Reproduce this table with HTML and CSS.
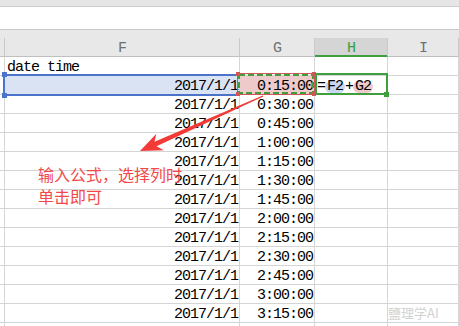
FILE: index.html
```html
<!DOCTYPE html>
<html lang="zh-CN">
<head>
<meta charset="utf-8">
<title>date time</title>
<link rel="stylesheet" href="styles.css">
</head>
<body>
<div class="app">
  <div class="topband"></div>
  <div class="formulabar"></div>
  <div class="band"></div>

  <div class="sheet">
    <div class="c hd c0"></div><div class="c hd center">F</div><div class="c hd center">G</div><div class="c hd center active">H</div><div class="c hd center">I</div>

    <div class="c c0"></div><div class="c left"><span>date time</span></div><div class="c"></div><div class="c"></div><div class="c"></div>

    <div class="c c0"></div><div class="c num sel-f"><span>2017/1/1</span></div><div class="c num sel-g"><span>0:15:00</span></div><div class="c left"><span class="formula">=<span class="ref ref-f">F2</span>+<span class="ref ref-g">G2</span></span></div><div class="c"></div>

    <div class="c c0"></div><div class="c num"><span>2017/1/1</span></div><div class="c num"><span>0:30:00</span></div><div class="c"></div><div class="c"></div>
    <div class="c c0"></div><div class="c num"><span>2017/1/1</span></div><div class="c num"><span>0:45:00</span></div><div class="c"></div><div class="c"></div>
    <div class="c c0"></div><div class="c num"><span>2017/1/1</span></div><div class="c num"><span>1:00:00</span></div><div class="c"></div><div class="c"></div>
    <div class="c c0"></div><div class="c num"><span>2017/1/1</span></div><div class="c num"><span>1:15:00</span></div><div class="c"></div><div class="c"></div>
    <div class="c c0"></div><div class="c num"><span>2017/1/1</span></div><div class="c num"><span>1:30:00</span></div><div class="c"></div><div class="c"></div>
    <div class="c c0"></div><div class="c num"><span>2017/1/1</span></div><div class="c num"><span>1:45:00</span></div><div class="c"></div><div class="c"></div>
    <div class="c c0"></div><div class="c num"><span>2017/1/1</span></div><div class="c num"><span>2:00:00</span></div><div class="c"></div><div class="c"></div>
    <div class="c c0"></div><div class="c num"><span>2017/1/1</span></div><div class="c num"><span>2:15:00</span></div><div class="c"></div><div class="c"></div>
    <div class="c c0"></div><div class="c num"><span>2017/1/1</span></div><div class="c num"><span>2:30:00</span></div><div class="c"></div><div class="c"></div>
    <div class="c c0"></div><div class="c num"><span>2017/1/1</span></div><div class="c num"><span>2:45:00</span></div><div class="c"></div><div class="c"></div>
    <div class="c c0"></div><div class="c num"><span>2017/1/1</span></div><div class="c num"><span>3:00:00</span></div><div class="c"></div><div class="c"></div>
    <div class="c c0"></div><div class="c num"><span>2017/1/1</span></div><div class="c num"><span>3:15:00</span></div><div class="c"></div><div class="c"></div>
    <div class="c c0"></div><div class="c"></div><div class="c"></div><div class="c"></div><div class="c"></div>
  </div>

  <!-- selection frames drawn over the grid -->
  <div class="frame-f"></div>
  <div class="handle handle-blue h-tl"></div>
  <div class="handle handle-blue h-bl"></div>

  <div class="frame-g">
    <svg class="ants" width="76" height="20" viewBox="0 0 76 20">
      <rect x="1" y="1" width="74" height="18" fill="none" stroke="#3f9f3f" stroke-width="2" stroke-dasharray="6 3"/>
    </svg>
  </div>
  <div class="handle handle-red r-tl"></div>
  <div class="handle handle-red r-tr"></div>
  <div class="handle handle-red r-bl"></div>
  <div class="handle handle-red r-br"></div>

  <div class="frame-h"></div>
  <div class="fill-handle"></div>

  <!-- callout arrow -->
  <svg class="arrow" width="459" height="326" viewBox="0 0 459 326">
    <polygon fill="#f23a36" points="140,151 163.8,150.2 156.5,146.3 263.3,96.6 262.7,95.4 154.5,141.8 156.4,133.8"/>
  </svg>

  <div class="note">输入公式，选择列时<br>单击即可</div>
  <div class="mark">鹽理学AI</div>
</div>
</body>
</html>
```

FILE: styles.css
```css
html, body {
  margin: 0;
  padding: 0;
  background: #ffffff;
}

.app {
  position: relative;
  width: 459px;
  height: 326px;
  overflow: hidden;
}

.topband {
  height: 6px;
  background: #e6e6e6;
  border-bottom: 1px solid #cccccc;
}

.formulabar {
  height: 22px;
  background: #ffffff;
  border-bottom: 1px solid #c8c8c8;
}

.band {
  height: 8px;
  background: #e8e8e8;
}

/* worksheet grid */
.sheet {
  display: grid;
  grid-template-columns: 5px 235px 75px 73px 1fr;
  grid-auto-rows: 19px;
}

.c {
  box-sizing: border-box;
  border-right: 1px solid #d6d6d6;
  border-bottom: 1px solid #d4d4d4;
  display: flex;
  align-items: flex-end;
  overflow: visible;
  white-space: nowrap;
  font-family: "Liberation Mono", "DejaVu Sans Mono", monospace;
  font-size: 15px;
  letter-spacing: -1px;
  line-height: 14px;
  color: #000000;
}

.hd {
  background: #e8e8e8;
  border-right-color: #c9c9c9;
  border-bottom-color: #bfbfbf;
  color: #707070;
}

.hd.active {
  background: #d5d5d5;
  color: #33a043;
  border-bottom-color: #3f9f3f;
  box-shadow: inset 0 -1px 0 #3f9f3f;
}

.center {
  justify-content: center;
}

.left {
  justify-content: flex-start;
  padding-left: 2px;
}

.num {
  justify-content: flex-end;
  padding-right: 1px;
}

.sel-f {
  background: #dae3f4;
}

.sel-g {
  background: #eecaca;
}

.formula .ref {
  display: inline-block;
  line-height: 12px;
  border-radius: 6px;
  padding: 0 2px 0 2px;
}

.ref-f {
  background: #c7d6f1;
}

.ref-g {
  background: #efc9c9;
}

/* selection frames */
.frame-f {
  position: absolute;
  left: 3px;
  top: 74px;
  width: 233px;
  height: 18px;
  border: 2px solid #4a73c9;
  border-right: none;
}

.frame-g {
  position: absolute;
  left: 237px;
  top: 73px;
  width: 76px;
  height: 20px;
  border: 1px solid #d05555;
}

.ants {
  display: block;
}

.frame-h {
  position: absolute;
  left: 315px;
  top: 73px;
  width: 69px;
  height: 18px;
  border: 2px solid #3f9f3f;
}

.handle {
  position: absolute;
}

.handle-blue {
  width: 5px;
  height: 5px;
  background: #4a73c9;
}

.h-tl { left: 2px; top: 72px; }
.h-bl { left: 2px; top: 93px; }

.handle-red {
  width: 4px;
  height: 4px;
  background: #d05555;
}

.r-tl { left: 236px; top: 72px; }
.r-tr { left: 312px; top: 72px; }
.r-bl { left: 236px; top: 92px; }
.r-br { left: 312px; top: 92px; }

.fill-handle {
  position: absolute;
  left: 384px;
  top: 92px;
  width: 5px;
  height: 5px;
  background: #3f9f3f;
}

.arrow {
  position: absolute;
  left: 0;
  top: 0;
  pointer-events: none;
}

.note {
  position: absolute;
  left: 38px;
  top: 163px;
  font-family: "Noto Sans CJK SC", "Noto Sans", sans-serif;
  font-size: 16px;
  line-height: 22px;
  color: #f34848;
  white-space: nowrap;
}

.mark {
  position: absolute;
  left: 388px;
  top: 306px;
  font-family: "Noto Sans CJK SC", "Noto Sans", sans-serif;
  font-size: 13px;
  line-height: 13px;
  color: #d2d2d2;
  white-space: nowrap;
}
```
